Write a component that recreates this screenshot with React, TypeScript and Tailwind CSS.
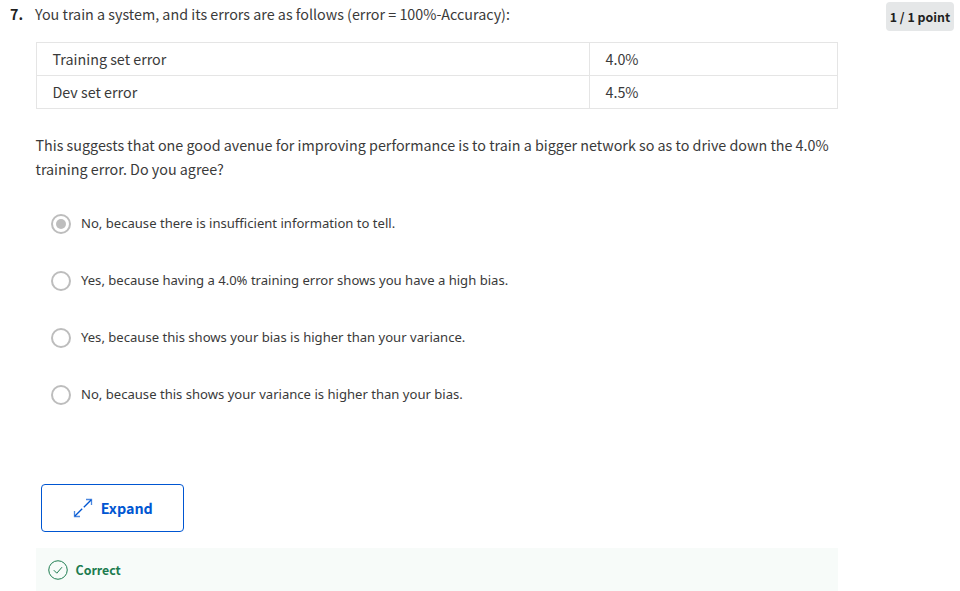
const options = [
  { text: 'No, because there is insufficient information to tell.', checked: true },
  { text: 'Yes, because having a 4.0% training error shows you have a high bias.', checked: false },
  { text: 'Yes, because this shows your bias is higher than your variance.', checked: false },
  { text: 'No, because this shows your variance is higher than your bias.', checked: false },
];

const rows = [
  ['Training set error', '4.0%'],
  ['Dev set error', '4.5%'],
];

function Radio({ checked }: { checked: boolean }) {
  return (
    <span className="flex size-5 shrink-0 items-center justify-center rounded-full border-2 border-[#bdbdbd]">
      {checked && <span className="size-2.5 rounded-full bg-[#bdbdbd]" />}
    </span>
  );
}

export default function App() {
  return (
    <div className="flex h-[591px] w-[960px] items-start overflow-hidden bg-white font-['Noto_Sans_CJK_SC',sans-serif] text-[14.32px] leading-6 text-[#3a3a3a]">
      <div className="w-[26px] shrink-0 pt-[2px] pl-2.5 mr-[10px] whitespace-nowrap font-bold text-[#1f1f1f]">7.</div>
      <main className="w-[802px] shrink-0 pt-[2px]">
        <p className="-ml-px whitespace-nowrap">You train a system, and its errors are as follows (error = 100%-Accuracy):</p>
        <table className="mt-4 w-full table-fixed border-collapse">
          <tbody>
            {rows.map(([label, value]) => (
              <tr key={label} className="h-[33px]">
                <td className="w-[553px] border border-[#e5e5e5] p-0 pl-[15.5px]">{label}</td>
                <td className="border border-[#e5e5e5] p-0 pl-[15.5px]">{value}</td>
              </tr>
            ))}
          </tbody>
        </table>
        <p className="mt-6 -ml-[0.5px] whitespace-nowrap">
          This suggests that one good avenue for improving performance is to train a bigger network so as to drive down the 4.0%
          <br />
          training error. Do you agree?
        </p>
        <div className="mt-[33px] flex flex-col gap-[37px] pl-[15px] font-['Noto_Sans',sans-serif] text-[13.08px] leading-5 text-[#3a3a3a]">
          {options.map((o) => (
            <label key={o.text} className="flex h-5 items-center gap-2.5 whitespace-nowrap">
              <Radio checked={o.checked} />
              <span className="pb-0.5">{o.text}</span>
            </label>
          ))}
        </div>
        <button className="mt-[79px] ml-[5px] flex h-12 w-[143px] items-center justify-center gap-[7.5px] rounded border border-[#0056d2] pl-px font-bold text-[#0056d2]">
          <svg width="20" height="20" viewBox="0 0 20 20" fill="none" stroke="currentColor" strokeWidth="1.3">
            <g strokeOpacity="0.7">
              <path d="M13 1.5h5.5V7M1.5 13v5.5H7" />
            </g>
            <path d="M18.3 1.7L10.8 9.2M9.2 10.8l-7.5 7.5" />
          </svg>
          <span>Expand</span>
        </button>
        <div className="mt-4 flex h-[43px] items-center gap-[7.5px] bg-[#f7fbf9] pl-3 text-[12.4px] font-bold text-[#1d7c50]">
          <svg width="20" height="20" viewBox="0 0 20 20" fill="none" stroke="currentColor">
            <circle cx="10" cy="10" r="9.25" />
            <path d="M5.8 10.2l3 3 5.2-6" />
          </svg>
          <span>Correct</span>
        </div>
      </main>
      <div className="mt-[2px] ml-12 flex h-[29px] w-[68px] shrink-0 items-center justify-center whitespace-nowrap rounded bg-[#e5e7e8] text-[12.4px] font-bold text-[#1f1f1f]">
        1 / 1 point
      </div>
    </div>
  );
}
